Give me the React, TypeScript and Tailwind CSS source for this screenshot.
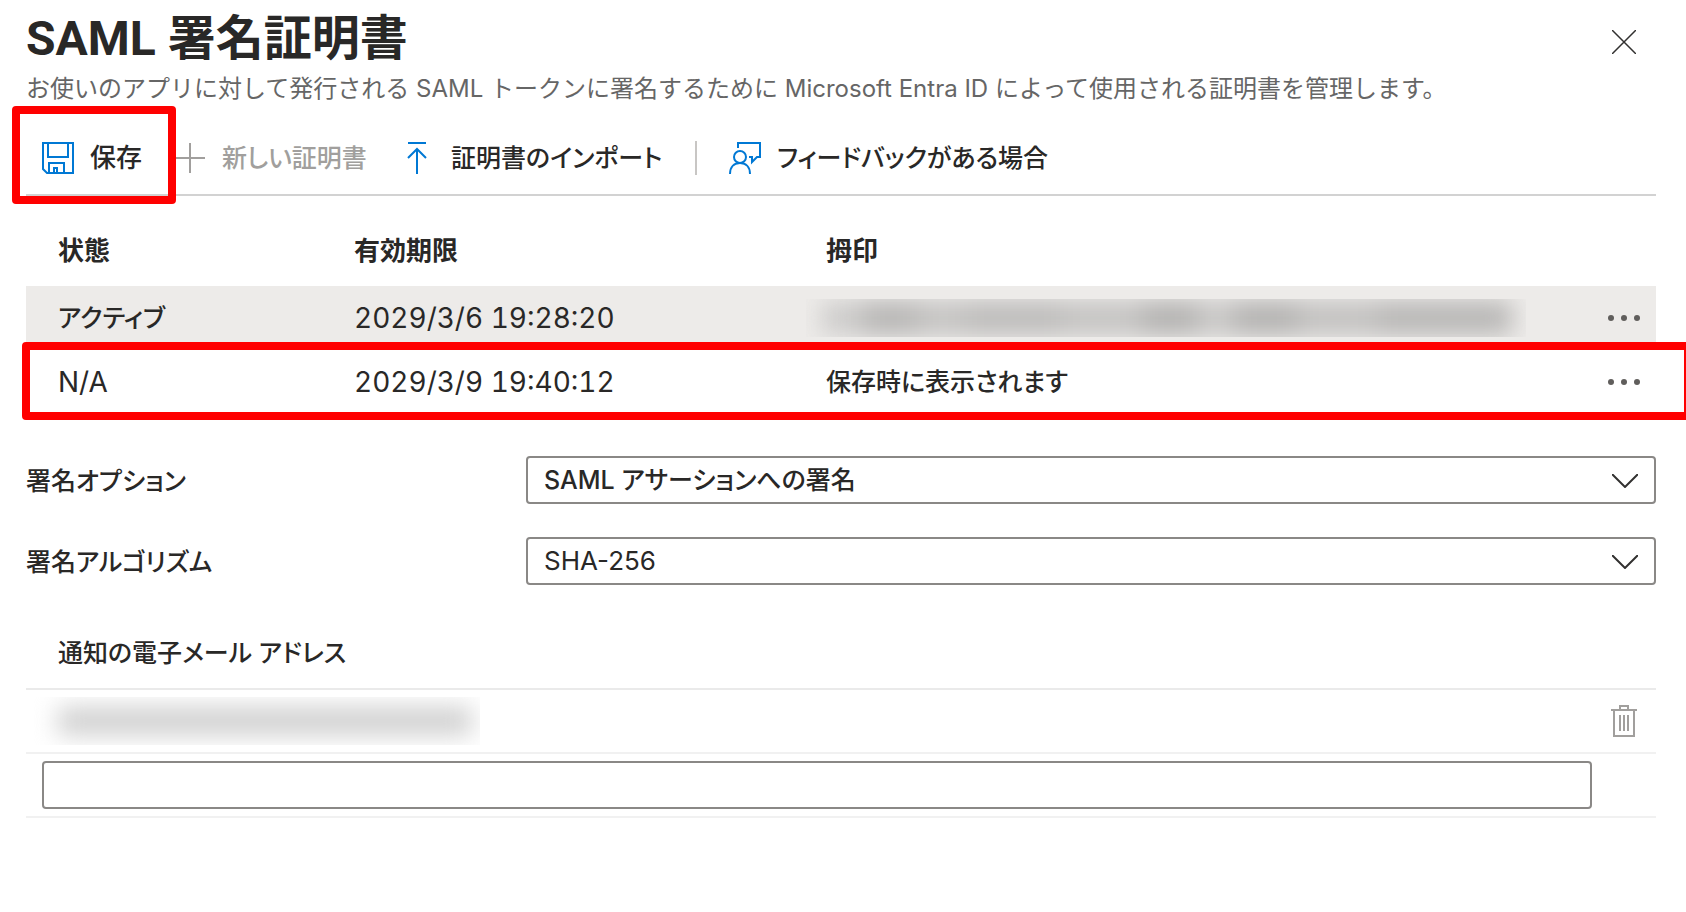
const uiFont = "font-['Inter','Noto_Sans_CJK_JP',sans-serif]";

const certificates = [
  { id: 1, status: "アクティブ", expires: "2029/3/6 19:28:20", thumbprint: null, active: true },
  { id: 2, status: "N/A", expires: "2029/3/9 19:40:12", thumbprint: "保存時に表示されます", active: false },
];

function SaveIcon() {
  return (
    <svg viewBox="0 0 32 32" className="h-8 w-8 shrink-0" fill="none" stroke="#0078d4" strokeWidth="2" aria-hidden="true">
      <path d="M1 1h30v30H5l-4-4z" />
      <path d="M6 1v14h20V1" />
      <path d="M7 31V21h15v10M12 31v-5h3v5" />
    </svg>
  );
}

function PlusIcon() {
  return (
    <svg viewBox="0 0 30 30" className="h-[30px] w-[30px] shrink-0" stroke="#a19f9d" strokeWidth="2" aria-hidden="true">
      <path d="M15 0v30M0 15h30" />
    </svg>
  );
}

function ImportIcon() {
  return (
    <svg viewBox="0 0 20 32" className="h-8 w-5 shrink-0" fill="none" stroke="#0078d4" strokeWidth="2" aria-hidden="true">
      <path d="M1 1h18M10 32V7M1 16l9-9 9 9" />
    </svg>
  );
}

function FeedbackIcon() {
  return (
    <svg viewBox="0 0 32 32" className="h-8 w-8 shrink-0" fill="none" stroke="#0078d4" strokeWidth="2" aria-hidden="true">
      <circle cx="11" cy="15" r="6" />
      <path d="M1 32c0-7 4-11 10-11s10 4 10 11" />
      <path d="M9 6V1h22v14h-3l-5 5v-5h-3" />
    </svg>
  );
}

function MoreButton() {
  return (
    <button type="button" aria-label="その他" className="flex h-16 w-full items-center justify-end pr-4">
      <svg viewBox="0 0 32 8" className="h-2 w-8" fill="#605e5c" aria-hidden="true">
        <circle cx="3" cy="4" r="3" />
        <circle cx="16" cy="4" r="3" />
        <circle cx="29" cy="4" r="3" />
      </svg>
    </button>
  );
}

function SelectField({ id, label, value, className }: { id: string; label: string; value: string; className: string }) {
  return (
    <div className="flex h-12 items-center">
      <label htmlFor={id} className="w-[500px] shrink-0 pt-0.5 font-medium [font-feature-settings:'palt']">{label}</label>
      <div className="relative flex-1">
        <select
          id={id}
          className={`block h-12 w-full appearance-none rounded-sm border-2 border-[#8a8886] bg-white px-4 [font-feature-settings:'palt'] ${className}`}
        >
          <option>{value}</option>
        </select>
        <svg viewBox="0 0 26 14" className="pointer-events-none absolute top-[18px] right-[18px] h-[14px] w-[26px]" fill="none" stroke="#323130" strokeWidth="2" aria-hidden="true">
          <path d="M0 0l13 13L26 0" />
        </svg>
      </div>
    </div>
  );
}

function Highlight({ className }: { className: string }) {
  return <div className={`pointer-events-none absolute rounded border-8 border-[#ff0000] ${className}`} />;
}

// the thumbprint is hidden behind a blurred strip
function MaskedThumbprint() {
  return (
    <div className="-ml-5 flex h-[38px] w-[720px] items-center overflow-hidden">
      <div className="ml-4 flex h-8 w-[690px] blur-md">
        <div className="w-10 bg-[#cbcac9]" />
        <div className="w-14 bg-[#b4b3b2]" />
        <div className="w-12 bg-[#c2c1c0]" />
        <div className="w-24 bg-[#bab9b8]" />
        <div className="w-20 bg-[#c2c1c0]" />
        <div className="w-14 bg-[#b0afae]" />
        <div className="w-9 bg-[#c6c5c4]" />
        <div className="w-16 bg-[#b0afae]" />
        <div className="w-20 bg-[#c0bfbe]" />
        <div className="flex-1 bg-[#b5b4b3]" />
      </div>
    </div>
  );
}

export default function App() {
  return (
    <main className={`min-h-screen overflow-x-hidden bg-white pr-[30px] pl-[26px] text-[25px] leading-8 text-[#292827] ${uiFont}`}>
      <header className="flex items-start justify-between pt-[9px]">
        <div>
          <h1 className="font-['Roboto','Noto_Sans_CJK_JP',sans-serif] text-5xl leading-[60px] font-bold">SAML 署名証明書</h1>
          <p className="text-2xl leading-10 text-[#666666]">
            お使いのアプリに対して発行される SAML トークンに署名するために Microsoft Entra ID によって使用される証明書を管理します。
          </p>
        </div>
        <button type="button" aria-label="閉じる" className="mt-[21px] mr-5">
          <svg viewBox="0 0 24 24" className="h-6 w-6" stroke="#323130" strokeWidth="1.5" aria-hidden="true">
            <path d="M0 0l24 24M24 0L0 24" />
          </svg>
        </button>
      </header>

      <div className="relative flex h-[87px] items-center border-b-2 border-[#d2d2d2] pt-[13px] pl-4 font-medium [font-feature-settings:'palt']">
        <button type="button" className="flex w-[133px] items-center gap-4 text-[26px]">
          <SaveIcon />
          保存
        </button>
        <button type="button" disabled className="flex w-[232px] items-center gap-[17px] text-[#a19f9d]">
          <PlusIcon />
          新しい証明書
        </button>
        <button type="button" className="flex w-72 items-center gap-6">
          <ImportIcon />
          証明書のインポート
        </button>
        <div className="mr-8 h-[34px] w-0.5 bg-[#c8c6c4]" />
        <button type="button" className="flex items-center gap-4">
          <FeedbackIcon />
          フィードバックがある場合
        </button>
        <Highlight className="-bottom-2.5 -left-[14px] z-10 h-[98px] w-[164px]" />
      </div>

      <div className="relative pt-[39px]">
        <table className="w-full table-fixed border-collapse text-left font-medium [font-feature-settings:'palt']">
          <thead>
            <tr className="h-[51px] align-top text-[26px]">
              <th className="w-[328px] pl-8 font-semibold">状態</th>
              <th className="w-[472px] font-semibold">有効期限</th>
              <th className="font-semibold">拇印</th>
              <th className="w-24" aria-label="操作" />
            </tr>
          </thead>
          <tbody>
            {certificates.map((cert) => (
              <tr key={cert.id} className={cert.active ? "h-16 bg-[#edebe9]" : "h-16"}>
                <td className={cert.active ? "pl-8" : "pl-8 text-[28px] font-normal"}>{cert.status}</td>
                <td className="text-[28px] font-normal [font-feature-settings:'tnum']">{cert.expires}</td>
                <td>{cert.thumbprint ?? <MaskedThumbprint />}</td>
                <td><MoreButton /></td>
              </tr>
            ))}
          </tbody>
        </table>
        <Highlight className="-right-9 -bottom-1.5 -left-1 h-[78px]" />
      </div>

      <section className="mt-[42px] flex flex-col gap-[33px]">
        <SelectField id="signing-option" label="署名オプション" value="SAML アサーションへの署名" className="font-medium" />
        <SelectField id="signing-algorithm" label="署名アルゴリズム" value="SHA-256" className="text-[26px]" />
      </section>

      <section className="mt-[52px]">
        <h2 className="border-b-2 border-[#eaeaea] pb-[19px] pl-8 font-medium [font-feature-settings:'palt']">
          <label htmlFor="notify-email">通知の電子メール アドレス</label>
        </h2>
        <div className="flex h-16 items-center justify-between border-b-2 border-[#f1f1f1] pr-[19px] pl-2">
          <div className="flex h-12 w-[446px] items-center overflow-hidden">
            <div className="ml-6 h-7 w-[414px] bg-[#cfcfcf] blur-md" />
          </div>
          <button type="button" aria-label="削除">
            <svg viewBox="0 0 26 32" className="h-8 w-[26px]" fill="none" stroke="#a19f9d" strokeWidth="2" aria-hidden="true">
              <path d="M0 5h26M9 5V1h8v4M3 5v26h20V5M9 10v16M13 10v16M17 10v16" />
            </svg>
          </button>
        </div>
        <div className="flex h-16 items-center border-b-2 border-[#f1f1f1] pr-16 pl-4">
          <input id="notify-email" type="email" className="h-12 w-full rounded-sm border-2 border-[#8a8886] px-4" />
        </div>
      </section>
    </main>
  );
}
